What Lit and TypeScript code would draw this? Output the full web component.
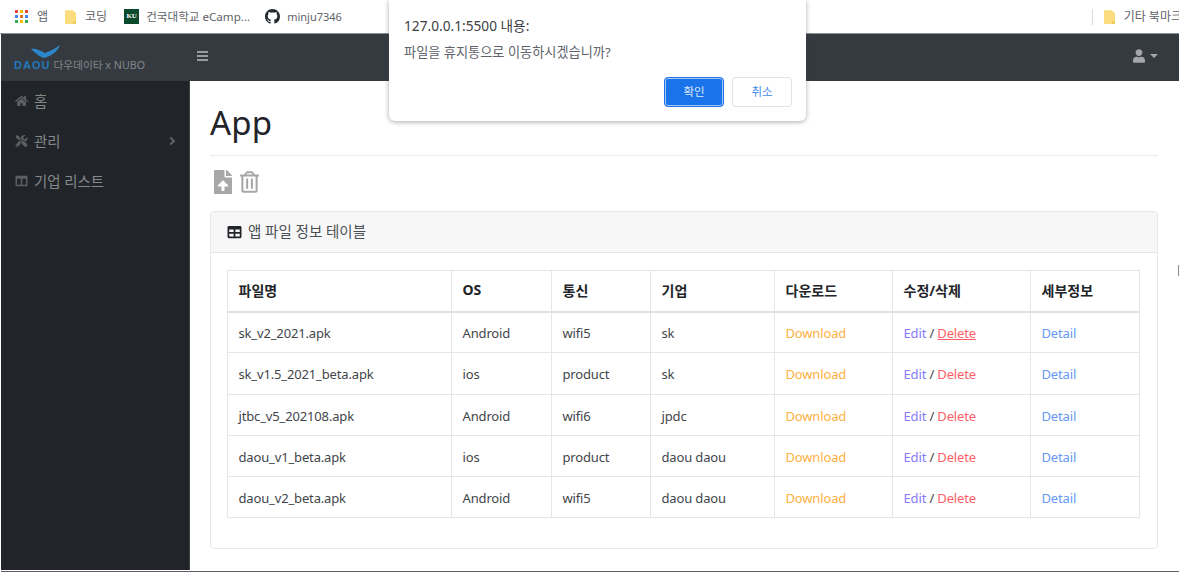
import { LitElement, html, css, svg } from "lit";
import { customElement } from "lit/decorators.js";

const FA = {
  home: "M280.37 148.26L96 300.11V464a16 16 0 0 0 16 16l112.06-.29a16 16 0 0 0 15.92-16V368a16 16 0 0 1 16-16h64a16 16 0 0 1 16 16v95.64a16 16 0 0 0 16 16.05L464 480a16 16 0 0 0 16-16V300L295.67 148.26a12.19 12.19 0 0 0-15.3 0zM571.6 251.47L488 182.56V44.05a12 12 0 0 0-12-12h-56a12 12 0 0 0-12 12v72.61L318.47 43a48 48 0 0 0-61 0L4.34 251.47a12 12 0 0 0-1.6 16.9l25.5 31A12 12 0 0 0 45.15 301l235.22-193.74a12.19 12.19 0 0 1 15.3 0L530.9 301a12 12 0 0 0 16.9-1.6l25.5-31a12 12 0 0 0-1.7-16.93z",
  tools: "M501.1 395.7L384 278.6c-23.1-23.1-57.6-27.6-85.4-13.9L192 158.1V96L64 0 0 64l96 128h62.1l106.6 106.6c-13.6 27.8-9.2 62.3 13.9 85.4l117.1 117.1c14.6 14.6 38.2 14.6 52.7 0l52.7-52.7c14.5-14.6 14.5-38.2 0-52.7zM331.7 225c28.3 0 54.9 11 74.9 31l19.4 19.4c15.8-6.9 30.8-16.5 43.8-29.5 37.1-37.1 49.7-89.3 37.9-136.7-2.2-9-13.5-12.1-20.1-5.5l-74.4 74.4-67.9-11.3L334 98.9l74.4-74.4c6.6-6.6 3.4-17.9-5.7-20.2-47.4-11.7-99.6.9-136.6 37.9-28.5 28.5-41.9 66.1-41.2 103.6l82.1 82.1c8.1-1.9 16.5-2.9 24.7-2.9zm-103.9 82l-56.7-56.7L18.7 402.8c-25 25-25 65.5 0 90.5s65.5 25 90.5 0l123.6-123.6c-7.6-19.9-9.9-41.6-5-62.7zM64 472c-13.2 0-24-10.8-24-24 0-13.3 10.7-24 24-24s24 10.7 24 24c0 13.2-10.7 24-24 24z",
  columns: "M464 32H48C21.49 32 0 53.49 0 80v352c0 26.51 21.49 48 48 48h416c26.51 0 48-21.49 48-48V80c0-26.51-21.49-48-48-48zM224 416H64V160h160v256zm224 0H288V160h160v256z",
  table: "M464 32H48C21.49 32 0 53.49 0 80v352c0 26.51 21.49 48 48 48h416c26.51 0 48-21.49 48-48V80c0-26.51-21.49-48-48-48zM224 416H64v-96h160v96zm0-160H64v-96h160v96zm224 160H288v-96h160v96zm0-160H288v-96h160v96z",
  user: "M224 256c70.7 0 128-57.3 128-128S294.7 0 224 0 96 57.3 96 128s57.3 128 128 128zm89.6 32h-16.7c-22.2 10.2-46.9 16-72.9 16s-50.6-5.8-72.9-16h-16.7C60.2 288 0 348.2 0 422.4V464c0 26.5 21.5 48 48 48h352c26.5 0 48-21.5 48-48v-41.6c0-74.2-60.2-134.4-134.4-134.4z",
  fileUpload: "M224 136V0H24C10.7 0 0 10.7 0 24v464c0 13.3 10.7 24 24 24h336c13.3 0 24-10.7 24-24V160H248c-13.2 0-24-10.8-24-24zm65.18 216.01H224v80c0 8.84-7.16 16-16 16h-32c-8.84 0-16-7.16-16-16v-80H94.82c-14.28 0-21.41-17.29-11.27-27.36l96.42-95.7c6.65-6.61 17.39-6.61 24.04 0l96.42 95.7c10.15 10.07 3.03 27.36-11.25 27.36zM377 105L279.1 7c-4.5-4.5-10.6-7-17-7H256v128h128v-6.1c0-6.3-2.5-12.4-7-16.9z",
  trash: "M268 416h24a12 12 0 0 0 12-12V188a12 12 0 0 0-12-12h-24a12 12 0 0 0-12 12v216a12 12 0 0 0 12 12zM432 80h-82.41l-34-56.7A48 48 0 0 0 274.41 0H173.59a48 48 0 0 0-41.16 23.3L98.41 80H16A16 16 0 0 0 0 96v16a16 16 0 0 0 16 16h16v336a48 48 0 0 0 48 48h288a48 48 0 0 0 48-48V128h16a16 16 0 0 0 16-16V96a16 16 0 0 0-16-16zM171.84 50.91A6 6 0 0 1 177 48h94a6 6 0 0 1 5.15 2.91L293.61 80H154.39zM368 464H80V128h288zm-212-48h24a12 12 0 0 0 12-12V188a12 12 0 0 0-12-12h-24a12 12 0 0 0-12 12v216a12 12 0 0 0 12 12z",
  github: "M8 0C3.58 0 0 3.58 0 8c0 3.54 2.29 6.53 5.47 7.59.4.07.55-.17.55-.38 0-.19-.01-.82-.01-1.49-2.01.37-2.53-.49-2.69-.94-.09-.23-.48-.94-.82-1.13-.28-.15-.68-.52-.01-.53.63-.01 1.08.58 1.23.82.72 1.21 1.87.87 2.33.66.07-.52.28-.87.51-1.07-1.78-.2-3.64-.89-3.64-3.95 0-.87.31-1.59.82-2.15-.08-.2-.36-1.02.08-2.12 0 0 .67-.21 2.2.82.64-.18 1.32-.27 2-.27.68 0 1.36.09 2 .27 1.53-1.04 2.2-.82 2.2-.82.44 1.1.16 1.92.08 2.12.51.56.82 1.27.82 2.15 0 3.07-1.87 3.75-3.65 3.95.29.25.54.73.54 1.48 0 1.07-.01 1.93-.01 2.2 0 .21.15.46.55.38A8.013 8.013 0 0016 8c0-4.42-3.58-8-8-8z",
};

const icon = (d: string, vw: number, vh: number, cls: string) =>
  html`<svg class=${cls} viewBox="0 0 ${vw} ${vh}" fill="currentColor">${svg`<path d=${d}></path>`}</svg>`;

const folder = html`<svg class="folder" viewBox="0 0 12 15">
  <path d="M1 0h7.5L12 3v11a1 1 0 0 1-1 1H1a1 1 0 0 1-1-1V1a1 1 0 0 1 1-1z" fill="#fbdc7f"></path>
  <path d="M9 12h3v3H9z" fill="#eec65c"></path>
</svg>`;

const appsGrid = () => {
  const colors = ["#e8453c", "#fbbc05", "#e8453c", "#4285f4", "#ea6a2e", "#4285f4", "#34a853", "#fbbc05", "#34a853"];
  return html`<svg class="apps" viewBox="0 0 13 13">
    ${colors.map(
      (c, i) => svg`<rect x=${(i % 3) * 5} y=${Math.floor(i / 3) * 5} width="3" height="3" fill=${c}></rect>`
    )}
  </svg>`;
};

const rows = [
  ["sk_v2_2021.apk", "Android", "wifi5", "sk"],
  ["sk_v1.5_2021_beta.apk", "ios", "product", "sk"],
  ["jtbc_v5_202108.apk", "Android", "wifi6", "jpdc"],
  ["daou_v1_beta.apk", "ios", "product", "daou daou"],
  ["daou_v2_beta.apk", "Android", "wifi5", "daou daou"],
];

@customElement("app-root")
export class AppRoot extends LitElement {
  static styles = css`
    :host {
      display: block;
      position: relative;
      width: 1179px;
      height: 574px;
      overflow: hidden;
      background: #fff;
      font-family: "Noto Sans", "Noto Sans CJK KR", sans-serif;
      color: #212529;
    }
    .bookmarks {
      display: flex;
      align-items: center;
      height: 33px;
      padding-left: 15px;
      font-size: 11px;
      color: #5f6368;
      white-space: nowrap;
      background: #fff;
      border-bottom: 1px solid #8d9094;
    }
    .mark {
      display: flex;
      align-items: center;
      gap: 9px;
      margin-right: 17px;
    }
    .mark.tight {
      gap: 7px;
      margin-right: 15px;
    }
    .ko {
      font-size: 12px;
      margin-top: -1px;
    }
    .mixed {
      font-size: 11.6px;
      margin-top: -1px;
    }
    .apps {
      width: 13px;
      height: 13px;
    }
    .folder {
      width: 11px;
      height: 14px;
    }
    .ku {
      display: block;
      width: 15px;
      height: 15px;
      background: #0b4a2c;
      color: #fff;
      font: bold 7px/15px "Liberation Serif", serif;
      text-align: center;
    }
    .gh {
      width: 15px;
      height: 15px;
      color: #24292e;
    }
    .other {
      margin-left: auto;
      margin-right: -3px;
      padding-left: 11px;
      border-left: 1px solid #d8d9db;
      height: 16px;
    }
    .shell {
      margin-left: 1px;
      height: 537px;
      border-bottom: 1px solid #5b5e62;
    }
    .nav {
      display: flex;
      align-items: center;
      height: 47px;
      background: #343a40;
      color: #9a9da0;
    }
    .brand {
      width: 189px;
      flex: none;
      padding: 3px 0 0 13px;
      box-sizing: border-box;
    }
    .wing {
      display: block;
      width: 29px;
      height: 13px;
      margin-left: 17px;
    }
    .brand-line {
      display: flex;
      align-items: baseline;
      gap: 3px;
      font-size: 10.7px;
      line-height: 15px;
      color: #83878b;
      white-space: nowrap;
    }
    .daou {
      font: bold 11px/15px "Liberation Sans", sans-serif;
      letter-spacing: 1px;
      color: #2279bd;
    }
    .burger {
      width: 11px;
      height: 10px;
      margin: -3px 0 0 7px;
      border-top: 2px solid #9a9da0;
      border-bottom: 2px solid #9a9da0;
      box-sizing: border-box;
      background: linear-gradient(#9a9da0, #9a9da0) center / 100% 2px no-repeat;
    }
    .account {
      display: flex;
      align-items: center;
      gap: 5px;
      margin: -3px 0 0 auto;
      padding-right: 21px;
      color: #a5a7aa;
    }
    .user {
      width: 12px;
      height: 14px;
    }
    .caret {
      width: 0;
      height: 0;
      border-left: 4px solid transparent;
      border-right: 4px solid transparent;
      border-top: 4px solid #a5a7aa;
    }
    .body {
      display: flex;
      height: 489px;
    }
    .side {
      width: 189px;
      flex: none;
      background: #212529;
      border-right: 1px solid #3c4043;
      box-sizing: border-box;
      color: #85888a;
      font-size: 14.4px;
    }
    .side-item {
      display: flex;
      align-items: center;
      height: 40px;
      padding: 0 12px 0 14px;
      gap: 6px;
    }
    .side-label {
      margin-top: -2px;
    }
    .side-ico {
      width: 13px;
      height: 12px;
      color: #5d6063;
    }
    .chev {
      margin-left: auto;
      width: 4px;
      height: 4px;
      border-top: 2px solid #5e6164;
      border-right: 2px solid #5e6164;
      transform: rotate(45deg);
      margin-right: 3px;
    }
    .main {
      flex: 1;
      min-width: 0;
      padding: 0 21px 0 20px;
    }
    h1 {
      margin: 0;
      height: 75px;
      box-sizing: border-box;
      padding-top: 18px;
      border-bottom: 1px solid #e9ecef;
      font-size: 33px;
      line-height: 48px;
      font-weight: 400;
      letter-spacing: 0.2px;
    }
    .tools {
      display: flex;
      align-items: center;
      gap: 8px;
      height: 55px;
      box-sizing: border-box;
      padding: 0 0 3px 4px;
      color: #a7a7a7;
    }
    .t-file {
      width: 18px;
      height: 24px;
    }
    .t-trash {
      width: 19px;
      height: 22px;
    }
    .card {
      height: 338px;
      box-sizing: border-box;
      border: 1px solid #e6e8eb;
      border-radius: 4px;
    }
    .card-head {
      display: flex;
      align-items: center;
      gap: 6px;
      height: 40px;
      padding-left: 16px;
      background: #f7f7f7;
      border-bottom: 1px solid #e2e4e7;
      border-radius: 4px 4px 0 0;
      font-size: 14.5px;
      color: #4a4f54;
    }
    .card-title {
      margin-top: -3px;
    }
    .t-table {
      width: 15px;
      height: 14px;
      color: #212529;
    }
    .card-body {
      padding: 17px 17px 0 16px;
    }
    table {
      border-collapse: collapse;
      table-layout: fixed;
      width: 912px;
      font-size: 13px;
      letter-spacing: -0.15px;
      color: #3f454a;
    }
    th,
    td {
      box-sizing: border-box;
      border: 1px solid #e3e6ea;
      padding: 0 0 0 10.5px;
      text-align: left;
      white-space: nowrap;
    }
    th {
      height: 41px;
      padding-bottom: 2px;
      font-size: 14px;
      letter-spacing: 0;
      font-weight: 700;
      color: #212529;
      border-bottom: 2px solid #dee2e6;
    }
    td {
      height: 41.25px;
      padding-top: 2px;
    }
    .c0 { width: 224px; }
    .c1 { width: 100px; }
    .c2 { width: 99px; }
    .c3 { width: 124px; }
    .c4 { width: 118px; }
    .c5 { width: 138px; }
    .c6 { width: 109px; }
    .dl { color: #ffb040; }
    .edit { color: #857bfb; }
    .del { color: #ff6068; }
    .del.hover { text-decoration: underline; }
    .detail { color: #6598f5; }
    .dialog {
      position: absolute;
      left: 389px;
      top: 0;
      width: 417px;
      height: 121px;
      box-sizing: border-box;
      padding: 16px 14px 0 15px;
      background: #fff;
      border-radius: 0 0 6px 6px;
      box-shadow: 0 1px 5px rgba(60, 64, 67, 0.45);
    }
    .d-title {
      font-size: 13.7px;
      line-height: 20px;
      color: #3c4043;
    }
    .d-msg {
      margin-top: 7px;
      font-size: 13.2px;
      line-height: 18px;
      color: #5f6368;
    }
    .d-btns {
      display: flex;
      justify-content: flex-end;
      gap: 8px;
      margin-top: 16px;
    }
    .btn {
      width: 60px;
      height: 30px;
      box-sizing: border-box;
      border-radius: 4px;
      border: 1px solid #e0e3e7;
      background: #fff;
      color: #4a8cec;
      font: 11.5px/28px "Noto Sans", "Noto Sans CJK KR", sans-serif;
      text-align: center;
    }
    .btn.primary {
      background: #1a73e8;
      color: #dce9fc;
      border: 1px solid #1a73e8;
      box-shadow: inset 0 0 0 1px #a9c8f5;
    }
    .edge {
      position: absolute;
      right: 0;
      top: 265px;
      width: 1px;
      height: 11px;
      background: #8a8a8a;
    }
  `;

  render() {
    return html`
      <div class="bookmarks">
        <span class="mark">${appsGrid()}<span class="ko">앱</span></span>
        <span class="mark">${folder}<span class="ko">코딩</span></span>
        <span class="mark tight"><span class="ku">KU</span><span class="mixed">건국대학교 eCamp...</span></span>
        <span class="mark tight">${icon(FA.github, 16, 16, "gh")}<span>minju7346</span></span>
        <span class="mark other">${folder}<span class="ko">기타 북마크</span></span>
      </div>
      <div class="shell">
        <div class="nav">
          <div class="brand">
            <svg class="wing" viewBox="0 0 29 13">
              <path d="M0 4 C4 3 9 5 14 8 C19 6 25 3 29 0 C27 6 21 11 13 13 C9 12 4 8 0 4z" fill="#2c86c9"></path>
            </svg>
            <div class="brand-line"><span class="daou">DAOU</span><span>다우데이타 x NUBO</span></div>
          </div>
          <div class="burger"></div>
          <div class="account">${icon(FA.user, 448, 512, "user")}<span class="caret"></span></div>
        </div>
        <div class="body">
          <aside class="side">
            <div class="side-item">${icon(FA.home, 576, 512, "side-ico")}<span class="side-label">홈</span></div>
            <div class="side-item">${icon(FA.tools, 512, 512, "side-ico")}<span class="side-label">관리</span><span class="chev"></span></div>
            <div class="side-item">${icon(FA.columns, 512, 512, "side-ico")}<span class="side-label">기업 리스트</span></div>
          </aside>
          <main class="main">
            <h1>App</h1>
            <div class="tools">
              ${icon(FA.fileUpload, 384, 512, "t-file")} ${icon(FA.trash, 448, 512, "t-trash")}
            </div>
            <section class="card">
              <div class="card-head">${icon(FA.table, 512, 512, "t-table")}<span class="card-title">앱 파일 정보 테이블</span></div>
              <div class="card-body">
                <table>
                  <thead>
                    <tr>
                      <th class="c0">파일명</th>
                      <th class="c1">OS</th>
                      <th class="c2">통신</th>
                      <th class="c3">기업</th>
                      <th class="c4">다운로드</th>
                      <th class="c5">수정/삭제</th>
                      <th class="c6">세부정보</th>
                    </tr>
                  </thead>
                  <tbody>
                    ${rows.map(
                      (r, i) => html`<tr>
                        ${r.map((c) => html`<td>${c}</td>`)}
                        <td class="dl">Download</td>
                        <td><span class="edit">Edit</span> / <span class="del ${i === 0 ? "hover" : ""}">Delete</span></td>
                        <td class="detail">Detail</td>
                      </tr>`
                    )}
                  </tbody>
                </table>
              </div>
            </section>
          </main>
        </div>
      </div>
      <div class="edge"></div>
      <div class="dialog">
        <div class="d-title">127.0.0.1:5500 내용:</div>
        <div class="d-msg">파일을 휴지통으로 이동하시겠습니까?</div>
        <div class="d-btns">
          <div class="btn primary">확인</div>
          <div class="btn">취소</div>
        </div>
      </div>
    `;
  }
}
